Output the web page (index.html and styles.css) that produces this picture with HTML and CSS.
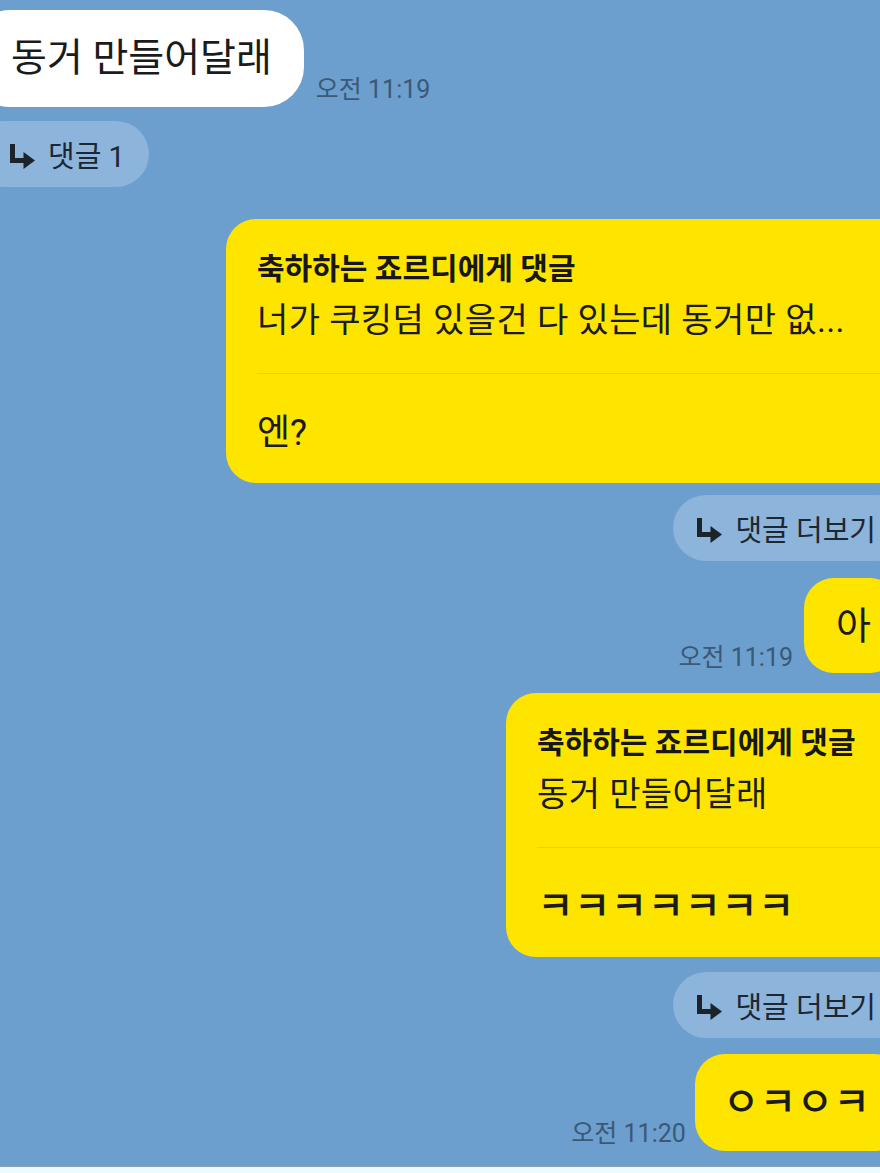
FILE: index.html
```html
<!DOCTYPE html>
<html lang="ko">
<head>
<meta charset="utf-8">
<title>채팅</title>
<link rel="stylesheet" href="styles.css">
</head>
<body>
<main class="chat">
  <div class="row row-in gap-10">
    <div class="bubble bubble-white">동거 만들어달래</div>
    <span class="time time-in">오전 11:19</span>
  </div>

  <div class="row row-in gap-14">
    <div class="pill pill-in">
      <svg class="reply-icon" viewBox="0 0 28 26" aria-hidden="true"><path d="M4.5 1 V17.5 H17" fill="none" stroke="#1d232b" stroke-width="5"/><polygon points="15.5,9 27,17.5 15.5,26" fill="#1d232b"/></svg>
      <span>댓글 1</span>
    </div>
  </div>

  <div class="row row-out gap-32">
    <div class="bubble bubble-yellow card card-wide">
      <div class="card-title">축하하는 죠르디에게 댓글</div>
      <div class="card-quote">너가 쿠킹덤 있을건 다 있는데 동거만 없...</div>
      <div class="card-divider"></div>
      <div class="card-reply">엔?</div>
    </div>
  </div>

  <div class="row row-out gap-12">
    <div class="pill pill-out">
      <svg class="reply-icon" viewBox="0 0 28 26" aria-hidden="true"><path d="M4.5 1 V17.5 H17" fill="none" stroke="#1d232b" stroke-width="5"/><polygon points="15.5,9 27,17.5 15.5,26" fill="#1d232b"/></svg>
      <span>댓글 더보기</span>
    </div>
  </div>

  <div class="row row-out gap-17">
    <span class="time time-out">오전 11:19</span>
    <div class="bubble bubble-yellow short short-a">아</div>
  </div>

  <div class="row row-out gap-20">
    <div class="bubble bubble-yellow card card-narrow">
      <div class="card-title">축하하는 죠르디에게 댓글</div>
      <div class="card-quote">동거 만들어달래</div>
      <div class="card-divider"></div>
      <div class="card-reply jamo">ㅋㅋㅋㅋㅋㅋㅋ</div>
    </div>
  </div>

  <div class="row row-out gap-15">
    <div class="pill pill-out">
      <svg class="reply-icon" viewBox="0 0 28 26" aria-hidden="true"><path d="M4.5 1 V17.5 H17" fill="none" stroke="#1d232b" stroke-width="5"/><polygon points="15.5,9 27,17.5 15.5,26" fill="#1d232b"/></svg>
      <span>댓글 더보기</span>
    </div>
  </div>

  <div class="row row-out gap-16">
    <span class="time time-out time-last">오전 11:20</span>
    <div class="bubble bubble-yellow short short-ok jamo">ㅇㅋㅇㅋ</div>
  </div>
</main>
<footer class="bottom-bar"></footer>
</body>
</html>
```

FILE: styles.css
```css
* { box-sizing: border-box; }

html, body {
  margin: 0;
  padding: 0;
}

body {
  width: 880px;
  height: 1173px;
  overflow: hidden;
  background: #6c9fcd;
  font-family: Roboto, "Noto Sans CJK KR", "Noto Sans", sans-serif;
  color: #1a1a1a;
  display: flex;
  flex-direction: column;
}

.chat {
  height: 1166px;
  overflow: hidden;
  display: flex;
  flex-direction: column;
}

.row {
  display: flex;
  align-items: flex-end;
}

.row-in { justify-content: flex-start; }
.row-out { justify-content: flex-end; }

.gap-10 { margin-top: 10px; }
.gap-12 { margin-top: 12px; }
.gap-14 { margin-top: 14px; }
.gap-15 { margin-top: 15px; }
.gap-16 { margin-top: 16px; }
.gap-17 { margin-top: 17px; }
.gap-20 { margin-top: 20px; }
.gap-32 { margin-top: 32px; }

.bubble {
  flex: none;
  white-space: nowrap;
}

.bubble-white {
  background: #ffffff;
  margin-left: -30px;
  height: 97px;
  border-radius: 40px;
  padding: 0 32px 0 41px;
  display: flex;
  align-items: center;
  font-size: 39px;
  line-height: 1;
  color: #1b1b1b;
}

.bubble-yellow {
  background: #fee500;
  border-radius: 30px;
}

.time {
  flex: none;
  font-size: 25px;
  line-height: 28px;
  color: #3b5877;
  white-space: nowrap;
}

.time-in {
  margin-left: 12px;
  margin-bottom: 3px;
}

.time-out {
  margin-right: 11px;
  margin-bottom: 1px;
}

.time-last { margin-right: 9px; margin-bottom: 3px; }

.pill {
  flex: none;
  height: 66px;
  border-radius: 33px;
  background: #8db4db;
  display: flex;
  align-items: center;
  gap: 12px;
  font-size: 29px;
  color: #1e2631;
  white-space: nowrap;
}

.pill-in {
  margin-left: -30px;
  padding: 0 24px 0 38px;
}

.pill-out {
  margin-right: -30px;
  padding: 0 34px 0 22px;
}

.reply-icon {
  width: 28px;
  height: 26px;
  flex: none;
  margin-top: 4px;
}

.card {
  padding: 30px 0 27px 31px;
  margin-right: -40px;
  overflow: hidden;
}

.card-wide { width: 694px; }
.card-narrow { width: 414px; }

.card-title {
  font-size: 30px;
  font-weight: 700;
  line-height: 40px;
  color: #171717;
}

.card-quote {
  margin-top: 8px;
  font-size: 34px;
  line-height: 46px;
  letter-spacing: 0.4px;
  color: #1b1b1b;
}

.card-divider {
  margin-top: 30px;
  height: 1px;
  background: rgba(150, 120, 0, 0.18);
}

.card-reply {
  margin-top: 36px;
  font-size: 36px;
  line-height: 46px;
  color: #1b1b1b;
}

.jamo {
  font-weight: 500;
  font-size: 40px;
}

.short {
  display: flex;
  align-items: center;
  font-size: 38px;
  line-height: 1;
  color: #1b1b1b;
}

.short-a {
  height: 95px;
  padding: 0 29px 0 32px;
  margin-right: -20px;
}

.short-ok {
  height: 97px;
  padding: 0 34px 0 28px;
  margin-right: -24px;
  font-size: 40px;
}

.bottom-bar {
  height: 7px;
  flex: none;
  background: #ecfcfe;
  border-top: 1px solid #8aa3b6;
}
```
